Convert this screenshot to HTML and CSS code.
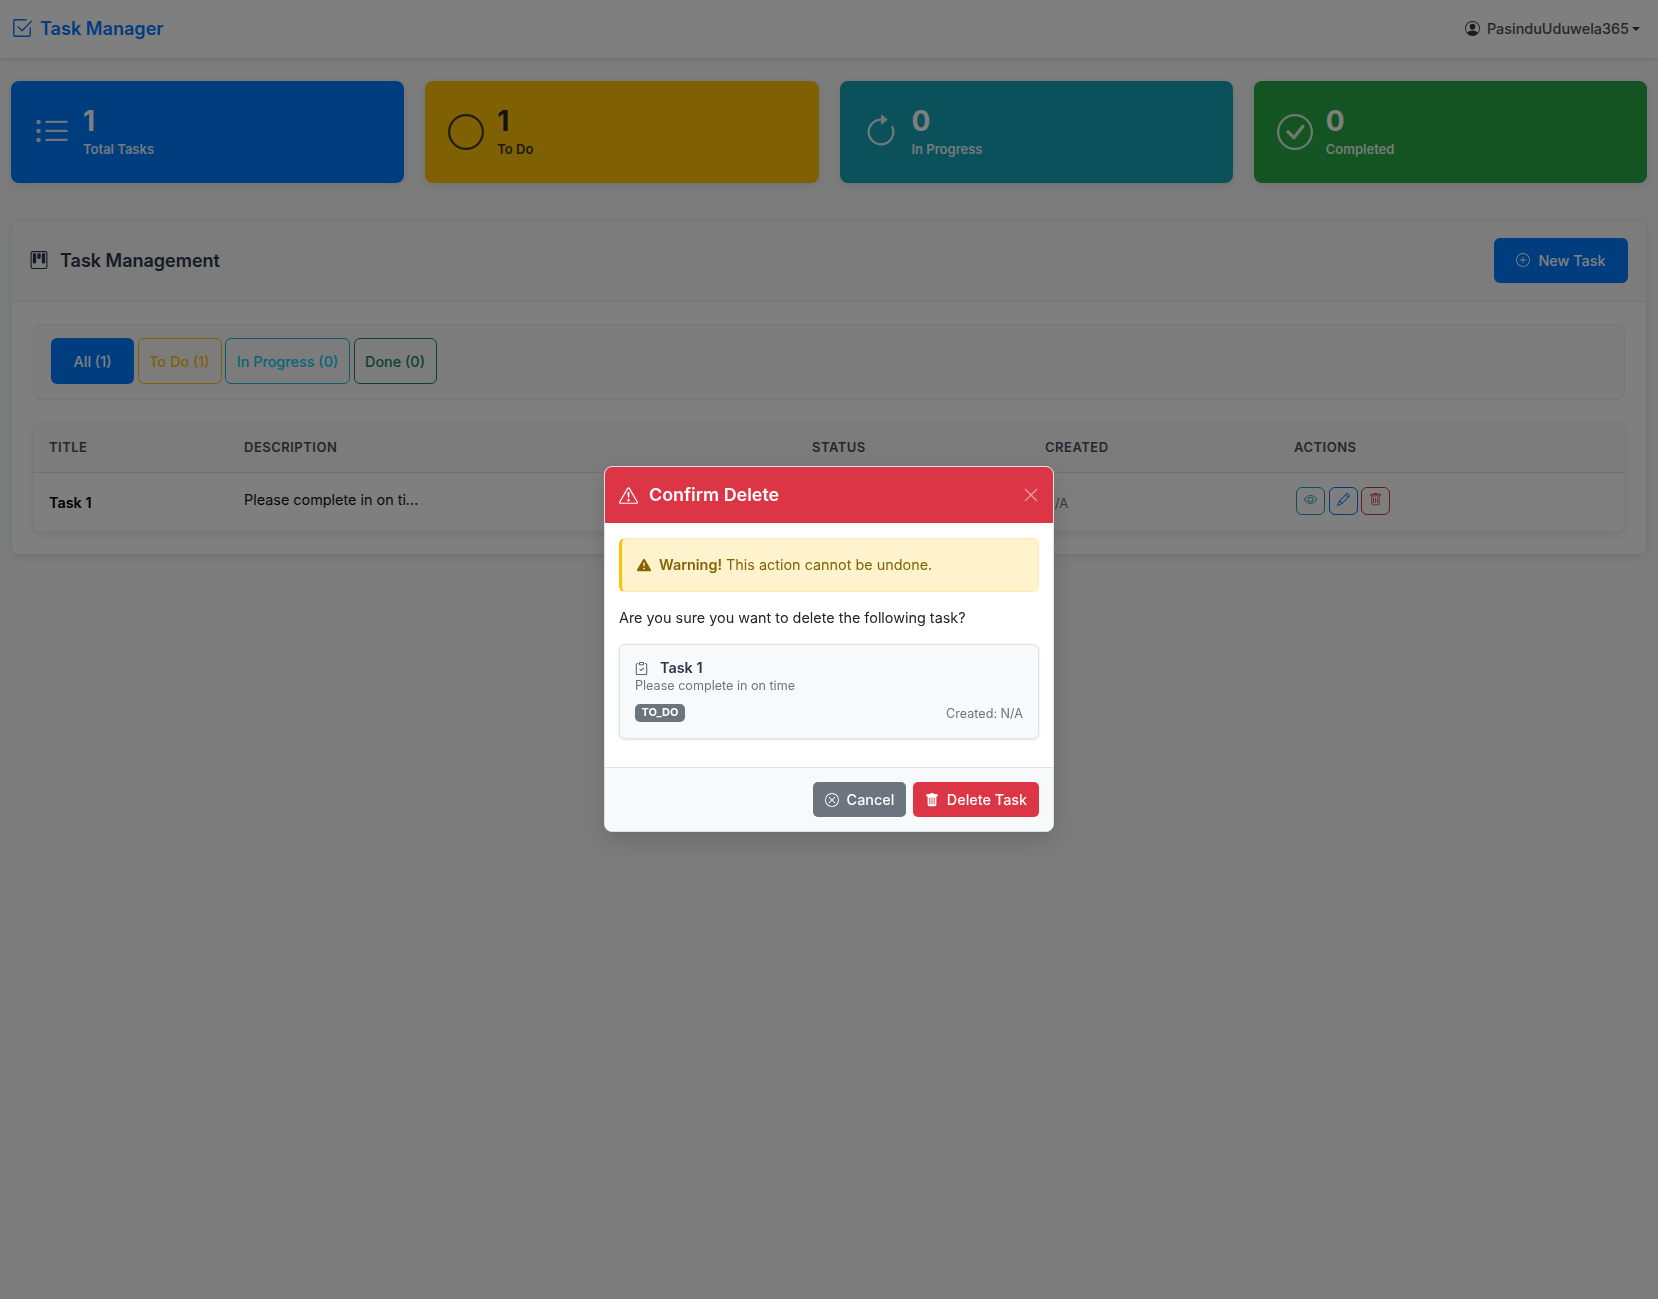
FILE: index.html
```html
<!DOCTYPE html>
<html lang="en">
<head>
<meta charset="utf-8">
<title>Task Manager</title>
<link rel="stylesheet" href="styles.css">
</head>
<body>
<nav class="navbar">
  <a class="brand">
    <svg class="ic brand-ic" viewBox="0 0 16 16"><path d="M3 14.5A1.5 1.5 0 0 1 1.5 13V3A1.5 1.5 0 0 1 3 1.5h8a.5.5 0 0 1 0 1H3a.5.5 0 0 0-.5.5v10a.5.5 0 0 0 .5.5h10a.5.5 0 0 0 .5-.5V8a.5.5 0 0 1 1 0v5a1.5 1.5 0 0 1-1.5 1.5H3z"/><path d="m8.354 10.354 7-7a.5.5 0 0 0-.708-.708L8 9.293 5.354 6.646a.5.5 0 1 0-.708.708l3 3a.5.5 0 0 0 .708 0z"/></svg>
    <span>Task Manager</span>
  </a>
  <div class="user">
    <svg class="ic user-ic" viewBox="0 0 16 16"><path d="M11 6a3 3 0 1 1-6 0 3 3 0 0 1 6 0z"/><path fill-rule="evenodd" d="M0 8a8 8 0 1 1 16 0A8 8 0 0 1 0 8zm8-7a7 7 0 0 0-5.468 11.37C3.242 11.226 4.805 10 8 10s4.757 1.225 5.468 2.37A7 7 0 0 0 8 1z"/></svg>
    <span>PasinduUduwela365</span>
    <i class="caret"></i>
  </div>
</nav>

<main class="page">
  <section class="stats">
    <div class="stat stat-blue">
      <svg class="ic stat-ic" viewBox="0 0 16 16"><path fill-rule="evenodd" d="M5 11.5a.5.5 0 0 1 .5-.5h9a.5.5 0 0 1 0 1h-9a.5.5 0 0 1-.5-.5zm0-4a.5.5 0 0 1 .5-.5h9a.5.5 0 0 1 0 1h-9a.5.5 0 0 1-.5-.5zm0-4a.5.5 0 0 1 .5-.5h9a.5.5 0 0 1 0 1h-9a.5.5 0 0 1-.5-.5zm-3 1a1 1 0 1 0 0-2 1 1 0 0 0 0 2zm0 4a1 1 0 1 0 0-2 1 1 0 0 0 0 2zm0 4a1 1 0 1 0 0-2 1 1 0 0 0 0 2z"/></svg>
      <div class="stat-body"><div class="stat-num">1</div><div class="stat-label">Total Tasks</div></div>
    </div>
    <div class="stat stat-yellow">
      <svg class="ic stat-ic" viewBox="0 0 16 16"><path d="M8 15A7 7 0 1 1 8 1a7 7 0 0 1 0 14zm0 1A8 8 0 1 0 8 0a8 8 0 0 0 0 16z"/></svg>
      <div class="stat-body"><div class="stat-num">1</div><div class="stat-label">To Do</div></div>
    </div>
    <div class="stat stat-teal">
      <svg class="ic stat-ic" viewBox="0 0 16 16"><path fill-rule="evenodd" d="M8 3a5 5 0 1 0 4.546 2.914.5.5 0 0 1 .908-.417A6 6 0 1 1 8 2v1z"/><path d="M8 4.466V.534a.25.25 0 0 1 .41-.192l2.36 1.966c.12.1.12.284 0 .384L8.41 4.658A.25.25 0 0 1 8 4.466z"/></svg>
      <div class="stat-body"><div class="stat-num">0</div><div class="stat-label">In Progress</div></div>
    </div>
    <div class="stat stat-green">
      <svg class="ic stat-ic" viewBox="0 0 16 16"><path d="M8 15A7 7 0 1 1 8 1a7 7 0 0 1 0 14zm0 1A8 8 0 1 0 8 0a8 8 0 0 0 0 16z"/><path d="M10.97 4.97a.235.235 0 0 0-.02.022L7.477 9.417 5.384 7.323a.75.75 0 0 0-1.06 1.06L6.97 11.03a.75.75 0 0 0 1.079-.02l3.992-4.99a.75.75 0 0 0-1.071-1.05z"/></svg>
      <div class="stat-body"><div class="stat-num">0</div><div class="stat-label">Completed</div></div>
    </div>
  </section>

  <section class="card">
    <header class="card-head">
      <h2 class="card-title">
        <svg class="ic title-ic" viewBox="0 0 16 16"><path d="M13.5 1a1 1 0 0 1 1 1v12a1 1 0 0 1-1 1h-11a1 1 0 0 1-1-1V2a1 1 0 0 1 1-1h11zm-11-1a2 2 0 0 0-2 2v12a2 2 0 0 0 2 2h11a2 2 0 0 0 2-2V2a2 2 0 0 0-2-2h-11z"/><path d="M6.5 3a1 1 0 0 1 1-1h1a1 1 0 0 1 1 1v3a1 1 0 0 1-1 1h-1a1 1 0 0 1-1-1V3zm-4 0a1 1 0 0 1 1-1h1a1 1 0 0 1 1 1v7a1 1 0 0 1-1 1h-1a1 1 0 0 1-1-1V3zm8 0a1 1 0 0 1 1-1h1a1 1 0 0 1 1 1v7a1 1 0 0 1-1 1h-1a1 1 0 0 1-1-1V3z"/></svg>
        <span>Task Management</span>
      </h2>
      <button class="btn btn-new">
        <svg class="ic new-ic" viewBox="0 0 16 16"><path d="M8 15A7 7 0 1 1 8 1a7 7 0 0 1 0 14zm0 1A8 8 0 1 0 8 0a8 8 0 0 0 0 16z"/><path d="M8 4a.5.5 0 0 1 .5.5v3h3a.5.5 0 0 1 0 1h-3v3a.5.5 0 0 1-1 0v-3h-3a.5.5 0 0 1 0-1h3v-3A.5.5 0 0 1 8 4z"/></svg>
        <span>New Task</span>
      </button>
    </header>
    <div class="card-body">
      <div class="filters">
        <button class="btn filter f-all">All (1)</button>
        <button class="btn filter f-todo">To Do (1)</button>
        <button class="btn filter f-prog">In Progress (0)</button>
        <button class="btn filter f-done">Done (0)</button>
      </div>
      <div class="table-wrap">
        <table class="tasks">
          <thead>
            <tr><th class="c-title">Title</th><th class="c-desc">Description</th><th class="c-status">Status</th><th class="c-created">Created</th><th class="c-actions">Actions</th></tr>
          </thead>
          <tbody>
            <tr>
              <td class="cell-title">Task 1</td>
              <td class="cell-desc">Please complete in on ti...</td>
              <td></td>
              <td class="cell-created">N/A</td>
              <td>
                <div class="actions">
                  <button class="act act-view"><svg class="ic" viewBox="0 0 16 16"><path d="M16 8s-3-5.5-8-5.5S0 8 0 8s3 5.5 8 5.5S16 8 16 8zM1.173 8a13.133 13.133 0 0 1 1.66-2.043C4.12 4.668 5.88 3.5 8 3.5c2.12 0 3.879 1.168 5.168 2.457A13.133 13.133 0 0 1 14.828 8c-.058.087-.122.183-.195.288-.335.48-.83 1.12-1.465 1.755C11.879 11.332 10.119 12.5 8 12.5c-2.12 0-3.879-1.168-5.168-2.457A13.134 13.134 0 0 1 1.172 8z"/><path d="M8 5.5a2.5 2.5 0 1 0 0 5 2.5 2.5 0 0 0 0-5zM4.5 8a3.5 3.5 0 1 1 7 0 3.5 3.5 0 0 1-7 0z"/></svg></button>
                  <button class="act act-edit"><svg class="ic" viewBox="0 0 16 16"><path d="M12.146.146a.5.5 0 0 1 .708 0l3 3a.5.5 0 0 1 0 .708l-10 10a.5.5 0 0 1-.168.11l-5 2a.5.5 0 0 1-.65-.65l2-5a.5.5 0 0 1 .11-.168l10-10zM11.207 2.5 13.5 4.793 14.793 3.5 12.5 1.207 11.207 2.5zm1.586 3L10.5 3.207 4 9.707V10h.5a.5.5 0 0 1 .5.5v.5h.5a.5.5 0 0 1 .5.5v.5h.293l6.5-6.5zm-9.761 5.175-.106.106-1.528 3.821 3.821-1.528.106-.106A.5.5 0 0 1 5 12.5V12h-.5a.5.5 0 0 1-.5-.5V11h-.5a.5.5 0 0 1-.468-.325z"/></svg></button>
                  <button class="act act-del"><svg class="ic" viewBox="0 0 16 16"><path d="M5.5 5.5A.5.5 0 0 1 6 6v6a.5.5 0 0 1-1 0V6a.5.5 0 0 1 .5-.5zm2.5 0a.5.5 0 0 1 .5.5v6a.5.5 0 0 1-1 0V6a.5.5 0 0 1 .5-.5zm3 .5a.5.5 0 0 0-1 0v6a.5.5 0 0 0 1 0V6z"/><path fill-rule="evenodd" d="M14.5 3a1 1 0 0 1-1 1H13v9a2 2 0 0 1-2 2H5a2 2 0 0 1-2-2V4h-.5a1 1 0 0 1-1-1V2a1 1 0 0 1 1-1H6a1 1 0 0 1 1-1h2a1 1 0 0 1 1 1h3.5a1 1 0 0 1 1 1v1zM4.118 4 4 4.059V13a1 1 0 0 0 1 1h6a1 1 0 0 0 1-1V4.059L11.882 4H4.118zM2.5 3V2h11v1h-11z"/></svg></button>
                </div>
              </td>
            </tr>
          </tbody>
        </table>
      </div>
    </div>
  </section>
</main>

<div class="backdrop">
  <div class="modal">
    <header class="modal-head">
      <svg class="ic head-ic" viewBox="0 0 16 16"><path d="M7.938 2.016A.13.13 0 0 1 8.002 2a.13.13 0 0 1 .063.016.146.146 0 0 1 .054.057l6.857 11.667c.036.06.035.124.002.183a.163.163 0 0 1-.054.06.116.116 0 0 1-.066.017H1.146a.115.115 0 0 1-.066-.017.163.163 0 0 1-.054-.06.176.176 0 0 1 .002-.183L7.884 2.073a.147.147 0 0 1 .054-.057zm1.044-.45a1.13 1.13 0 0 0-1.96 0L.165 13.233c-.457.778.091 1.767.98 1.767h13.713c.889 0 1.438-.99.98-1.767L8.982 1.566z"/><path d="M7.002 12a1 1 0 1 1 2 0 1 1 0 0 1-2 0zM7.1 5.995a.905.905 0 1 1 1.8 0l-.35 3.507a.552.552 0 0 1-1.1 0L7.1 5.995z"/></svg>
      <h3 class="modal-title">Confirm Delete</h3>
      <svg class="close" viewBox="0 0 16 16"><path d="M2 2l12 12M14 2L2 14"/></svg>
    </header>
    <div class="modal-body">
      <div class="alert">
        <svg class="ic alert-ic" viewBox="0 0 16 16"><path d="M8.982 1.566a1.13 1.13 0 0 0-1.96 0L.165 13.233c-.457.778.091 1.767.98 1.767h13.713c.889 0 1.438-.99.98-1.767L8.982 1.566zM8 5c.535 0 .954.462.9.995l-.35 3.507a.552.552 0 0 1-1.1 0L7.1 5.995A.905.905 0 0 1 8 5zm.002 6a1 1 0 1 1 0 2 1 1 0 0 1 0-2z"/></svg>
        <span><strong>Warning!</strong> This action cannot be undone.</span>
      </div>
      <p class="question">Are you sure you want to delete the following task?</p>
      <div class="task-box">
        <div class="task-name">
          <svg class="ic clip-ic" viewBox="0 0 16 16"><path fill-rule="evenodd" d="M10.854 7.146a.5.5 0 0 1 0 .708l-3 3a.5.5 0 0 1-.708 0l-1.5-1.5a.5.5 0 1 1 .708-.708L7.5 9.793l2.646-2.647a.5.5 0 0 1 .708 0z"/><path d="M4 1.5H3a2 2 0 0 0-2 2V14a2 2 0 0 0 2 2h10a2 2 0 0 0 2-2V3.5a2 2 0 0 0-2-2h-1v1h1a1 1 0 0 1 1 1V14a1 1 0 0 1-1 1H3a1 1 0 0 1-1-1V3.5a1 1 0 0 1 1-1h1v-1z"/><path d="M9.5 1a.5.5 0 0 1 .5.5v1a.5.5 0 0 1-.5.5h-3a.5.5 0 0 1-.5-.5v-1a.5.5 0 0 1 .5-.5h3zm-3-1A1.5 1.5 0 0 0 5 1.5v1A1.5 1.5 0 0 0 6.5 4h3A1.5 1.5 0 0 0 11 2.5v-1A1.5 1.5 0 0 0 9.5 0h-3z"/></svg>
          <span>Task 1</span>
        </div>
        <div class="task-desc">Please complete in on time</div>
        <div class="task-meta">
          <span class="badge">TO_DO</span>
          <span class="created">Created: N/A</span>
        </div>
      </div>
    </div>
    <footer class="modal-foot">
      <button class="btn btn-cancel">
        <svg class="ic foot-ic" viewBox="0 0 16 16"><path d="M8 15A7 7 0 1 1 8 1a7 7 0 0 1 0 14zm0 1A8 8 0 1 0 8 0a8 8 0 0 0 0 16z"/><path d="M4.646 4.646a.5.5 0 0 1 .708 0L8 7.293l2.646-2.647a.5.5 0 0 1 .708.708L8.707 8l2.647 2.646a.5.5 0 0 1-.708.708L8 8.707l-2.647 2.647a.5.5 0 0 1-.708-.708L7.293 8 4.646 5.354a.5.5 0 0 1 0-.708z"/></svg>
        <span>Cancel</span>
      </button>
      <button class="btn btn-delete">
        <svg class="ic foot-ic" viewBox="0 0 16 16"><path d="M2.5 1a1 1 0 0 0-1 1v1a1 1 0 0 0 1 1H3v9a2 2 0 0 0 2 2h6a2 2 0 0 0 2-2V4h.5a1 1 0 0 0 1-1V2a1 1 0 0 0-1-1H10a1 1 0 0 0-1-1H7a1 1 0 0 0-1 1H2.5zm3 4a.5.5 0 0 1 .5.5v7a.5.5 0 0 1-1 0v-7a.5.5 0 0 1 .5-.5zM8 5a.5.5 0 0 1 .5.5v7a.5.5 0 0 1-1 0v-7A.5.5 0 0 1 8 5zm3 .5v7a.5.5 0 0 1-1 0v-7a.5.5 0 0 1 1 0z"/></svg>
        <span>Delete Task</span>
      </button>
    </footer>
  </div>
</div>
</body>
</html>
```
FILE: styles.css
```css
* { box-sizing: border-box; }
html, body { margin: 0; height: 100%; }
body {
  font-family: Inter, "Liberation Sans", sans-serif;
  font-size: 16px;
  line-height: 1.5;
  color: #212529;
  background: #f8f9fa;
  overflow: hidden;
}
.ic { fill: currentColor; display: block; flex: none; }

.navbar {
  height: 58px;
  padding: 0 18px 0 11px;
  background: #fff;
  box-shadow: 0 2px 4px rgba(0,0,0,.1);
  display: flex;
  align-items: center;
  justify-content: space-between;
}
.brand {
  display: flex;
  align-items: center;
  gap: 7px;
  margin-bottom: 1px;
  font-size: 18.1px;
  font-weight: 600;
  color: #007bff;
}
.brand-ic { width: 22px; height: 22px; }
.user { display: flex; align-items: center; gap: 7px; font-size: 14.4px; font-weight: 500; color: #495057; }
.user-ic { width: 15px; height: 15px; color: #343a40; }
.caret {
  margin-left: -4px;
  border-top: 4px solid #343a40;
  border-left: 4px solid transparent;
  border-right: 4px solid transparent;
}

.page { padding: 23px 11px 0; }
.stats {
  display: grid;
  grid-template-columns: repeat(4, 1fr);
  gap: 21px;
  margin-bottom: 37px;
}
.stat {
  height: 102px;
  border-radius: 8px;
  box-shadow: 0 2px 8px rgba(0,0,0,.1);
  padding: 0 23px;
  display: flex;
  align-items: center;
  gap: 13px;
  color: #fff;
}
.stat-blue { background: #007bff; }
.stat-yellow { background: #ffc107; color: #212529; }
.stat-teal { background: #17a2b8; }
.stat-green { background: #28a745; }
.stat-ic { width: 36px; height: 36px; opacity: .85; }
.stat-body { margin-top: -6px; }
.stat-num { font-size: 28px; font-weight: 700; line-height: 40px; }
.stat-label { font-size: 13px; font-weight: 600; line-height: 18px; margin-top: -1px; opacity: .9; }

.card {
  background: #fff;
  border: 1px solid #e9ecef;
  border-radius: 8px;
  box-shadow: 0 2px 8px rgba(0,0,0,.08);
  height: 335px;
}
.card-head {
  height: 81px;
  padding: 0 18px 2px;
  display: flex;
  align-items: center;
  justify-content: space-between;
  border-bottom: 1px solid #e9ecef;
  background: #f8f9fa;
  border-radius: 8px 8px 0 0;
}
.card-title {
  margin: 0;
  font-size: 18px;
  font-weight: 600;
  color: #2d3748;
  display: flex;
  align-items: center;
  gap: 12px;
}
.title-ic { width: 18px; height: 18px; }
.btn {
  font-family: inherit;
  border: 1px solid transparent;
  cursor: pointer;
  display: inline-flex;
  align-items: center;
  justify-content: center;
  font-weight: 500;
}
.btn-new {
  width: 134px;
  height: 45px;
  gap: 8px;
  border-radius: 6px;
  background: #007bff;
  color: #fff;
  font-size: 14.4px;
}
.new-ic { width: 14px; height: 14px; }
.card-body { padding: 22px 21px 0; }
.filters {
  height: 76px;
  padding: 0 17px 2px;
  display: flex;
  align-items: center;
  gap: 3.5px;
  border: 1px solid #e9ecef;
  border-radius: 8px;
  background: #f8f9fa;
  margin-bottom: 23px;
}
.filter { height: 46px; padding: 0; border-radius: 6px; font-size: 14.4px; background: transparent; }
.f-all { width: 83px; background: #007bff; color: #fff; }
.f-todo { width: 84px; border-color: #ffc107; color: #ffc107; }
.f-prog { width: 125px; border-color: #1ab6d3; color: #0dcaf0; }
.f-done { width: 83px; border-color: #198754; color: #198754; }

.table-wrap {
  border: 1px solid #edf0f2;
  border-radius: 8px;
  box-shadow: 0 2px 8px rgba(0,0,0,.1);
  background: #fff;
  overflow: hidden;
}
.tasks { width: 100%; border-collapse: collapse; table-layout: fixed; }
.tasks th {
  height: 48px;
  padding: 0 15px;
  text-align: left;
  text-transform: uppercase;
  font-size: 13px;
  font-weight: 600;
  letter-spacing: .5px;
  color: #495057;
  background: #f8f9fa;
  border-bottom: 1px solid #dee2e6;
}
.c-title { width: 195px; }
.c-desc { width: 568px; }
.c-status { width: 233px; }
.c-created { width: 249px; }
.tasks td { height: 59px; padding: 0 15px; font-size: 14.4px; vertical-align: middle; }
.tasks .cell-title { font-weight: 600; color: #000; padding-top: 3px; }
.tasks .cell-desc { color: #111; padding-bottom: 4px; }
.tasks .cell-created { color: #6c757d; font-size: 13px; padding-top: 3px; }
.actions { display: flex; gap: 3.5px; margin-bottom: 1px; padding-left: 2px; }
.act {
  width: 29px;
  height: 28px;
  padding: 0 0 4px;
  border: 1px solid;
  border-radius: 6px;
  background: transparent;
  display: flex;
  align-items: center;
  justify-content: center;
}
.act svg { width: 13px; height: 13px; }
.act-view { color: #17a2b8; border-color: #17a2b8; }
.act-edit { color: #007bff; border-color: #007bff; }
.act-del { color: #dc3545; border-color: #dc3545; }

.backdrop {
  position: fixed;
  inset: 0;
  background: rgba(0,0,0,.5);
  display: flex;
  align-items: center;
  justify-content: center;
}
.modal {
  width: 450px;
  height: 366px;
  margin-bottom: 1px;
  background: #fff;
  border: 1px solid #dee2e6;
  border-radius: 8px;
  box-shadow: 0 8px 24px rgba(0,0,0,.15);
  overflow: hidden;
  display: flex;
  flex-direction: column;
}
.modal-head {
  height: 56px;
  padding: 0 14px;
  background: #dc3545;
  color: #fff;
  display: flex;
  align-items: center;
  gap: 11px;
  flex: none;
}
.head-ic { width: 19px; height: 19px; }
.modal-title { margin: 0; flex: 1; font-size: 17.9px; font-weight: 600; }
.close { width: 16px; height: 16px; fill: none; stroke: #fff; stroke-opacity: .5; stroke-width: 1.3; }
.modal-body { flex: 1; padding: 15px 14px 0; }
.alert {
  height: 54px;
  padding: 0 15px;
  display: flex;
  align-items: center;
  gap: 8px;
  font-size: 14.4px;
  color: #856404;
  background: #fff3cd;
  border: 1px solid #ffecb5;
  border-left: 3px solid #ffc107;
  border-radius: 6px;
}
.alert-ic { width: 14px; height: 14px; }
.alert strong { font-weight: 600; }
.question { margin: 15px 0 16px; font-size: 14.4px; line-height: 21px; color: #212529; }
.task-box {
  height: 95px;
  padding: 14px 15px 0;
  border: 1px solid #dee2e6;
  border-radius: 6px;
  background: #f8f9fa;
  box-shadow: 0 1px 3px rgba(0,0,0,.1);
}
.task-name { display: flex; align-items: center; gap: 12px; font-size: 14.4px; font-weight: 600; color: #2d3748; line-height: 18px; }
.clip-ic { width: 13px; height: 13px; }
.task-desc { font-size: 12.6px; line-height: 18px; color: #6c757d; }
.task-meta { display: flex; align-items: center; justify-content: space-between; margin-top: 10px; }
.badge {
  width: 50px;
  height: 18px;
  margin-top: -2px;
  border-radius: 5px;
  background: #6c757d;
  color: #fff;
  font-size: 11px;
  font-weight: 700;
  line-height: 17px;
  text-align: center;
}
.created { font-size: 12.6px; color: #6c757d; }
.modal-foot {
  flex: none;
  height: 64px;
  padding: 14px 14px 0;
  display: flex;
  justify-content: flex-end;
  gap: 7px;
  background: #f8f9fa;
  border-top: 1px solid #dee2e6;
}
.modal-foot .btn { height: 35px; border-radius: 5px; font-size: 14.4px; gap: 8px; color: #fff; }
.foot-ic { width: 14px; height: 14px; }
.btn-cancel { width: 93px; background: #6c757d; }
.btn-delete { width: 126px; background: #dc3545; }
```
